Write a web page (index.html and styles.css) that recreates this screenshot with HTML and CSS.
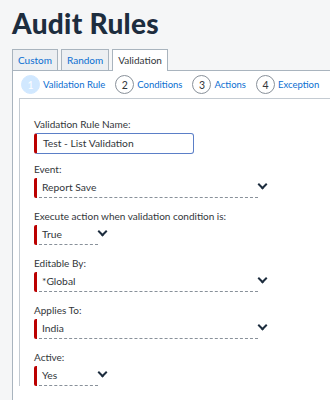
FILE: index.html
```html
<!DOCTYPE html>
<html lang="en">
<head>
    <meta charset="UTF-8">
    <meta name="viewport" content="width=device-width, initial-scale=1.0">
    <title>Audit Rules</title>
    <link rel="stylesheet" href="styles.css">
</head>
<body>
    <h1>Audit Rules</h1>
    <div class="tabs">
        <div class="tab">Custom</div>
        <div class="tab">Random</div>
        <div class="tab active">Validation</div>
    </div>

    <div class="panel">
        <div class="steps">
            <div class="step current"><span class="num">1</span>Validation Rule</div>
            <div class="step"><span class="num">2</span>Conditions</div>
            <div class="step"><span class="num">3</span>Actions</div>
            <div class="step"><span class="num">4</span>Exception</div>
        </div>

        <div class="form">
            <div class="field first">
                <label>Validation Rule Name:</label>
                <div class="input">Test - List Validation</div>
            </div>
            <div class="field">
                <label>Event:</label>
                <div class="select wide">Report Save<span class="chev"></span></div>
            </div>
            <div class="field">
                <label>Execute action when validation condition is:</label>
                <div class="select short">True<span class="chev"></span></div>
            </div>
            <div class="field">
                <label>Editable By:</label>
                <div class="select wide">*Global<span class="chev"></span></div>
            </div>
            <div class="field">
                <label>Applies To:</label>
                <div class="select wide">India<span class="chev"></span></div>
            </div>
            <div class="field">
                <label>Active:</label>
                <div class="select short">Yes<span class="chev"></span></div>
            </div>
        </div>
    </div>
</body>
</html>
```

FILE: styles.css
```css
body { margin: 0; padding: 0 0 0 12px; background: #f5f6f7; font-family: Lato, Arial, sans-serif; color: #32363a; overflow: hidden; }
h1 { margin: 0; padding-top: 6px; height: 43px; font-family: Lato, sans-serif; font-weight: 900; font-size: 28px; color: #1d2d3e; letter-spacing: 0.3px; }
.tabs { display: flex; gap: 3px; }
.tab { height: 20px; line-height: 20px; padding: 0 5px; font-size: 10px; color: #0a6ed1; background: #eceff2; border: 1px solid #a9b4be; border-bottom: none; }
.tab.active { background: #fff; color: #32363a; height: 21px; margin-bottom: -1px; position: relative; }
.panel { background: #fff; border-top: 1px solid #a9b4be; border-left: 1px solid #a9b4be; padding-left: 6px; min-height: 340px; }
.steps { display: flex; align-items: center; height: 27px; border-bottom: 1px solid #c4cbd2; gap: 10px; padding-left: 2px; }
.step { display: flex; align-items: center; gap: 3px; font-size: 9.5px; color: #0a6ed1; white-space: nowrap; }
.num { width: 17px; height: 17px; border: 1px solid #89919a; border-radius: 50%; display: flex; align-items: center; justify-content: center; color: #32363a; font-size: 10.5px; }
.step.current .num { background: #d1e8ff; border-color: #d1e8ff; color: #fff; }
.form { border-left: 1px solid #c4cbd2; padding: 18px 0 0 14px; }
.field { margin-bottom: 11px; }
.field.first { margin-bottom: 8px; }
label { display: block; font-size: 10px; height: 14px; line-height: 14px; color: #32363a; margin-bottom: 2px; }
.input { width: 150px; height: 19px; line-height: 19px; padding-left: 6px; font-size: 10.3px; border: 1px solid #5b7fc7; border-left: 3px solid #bb0000; border-radius: 3px; }
.select { position: relative; height: 20px; line-height: 19px; padding-left: 5px; font-size: 10.3px; border-left: 3px solid #bb0000; border-radius: 2px 0 0 2px; }
.select::after { content: ""; position: absolute; left: 2px; right: 0; bottom: 0; border-bottom: 1px dashed #89919a; }
.select.wide { width: 216px; }
.select.short { width: 56px; }
.chev { position: absolute; top: 3px; width: 5px; height: 5px; border-right: 2px solid #1d2d3e; border-bottom: 2px solid #1d2d3e; transform: rotate(45deg); }
.wide .chev { right: -8px; }
.short .chev { right: -8px; }
```
